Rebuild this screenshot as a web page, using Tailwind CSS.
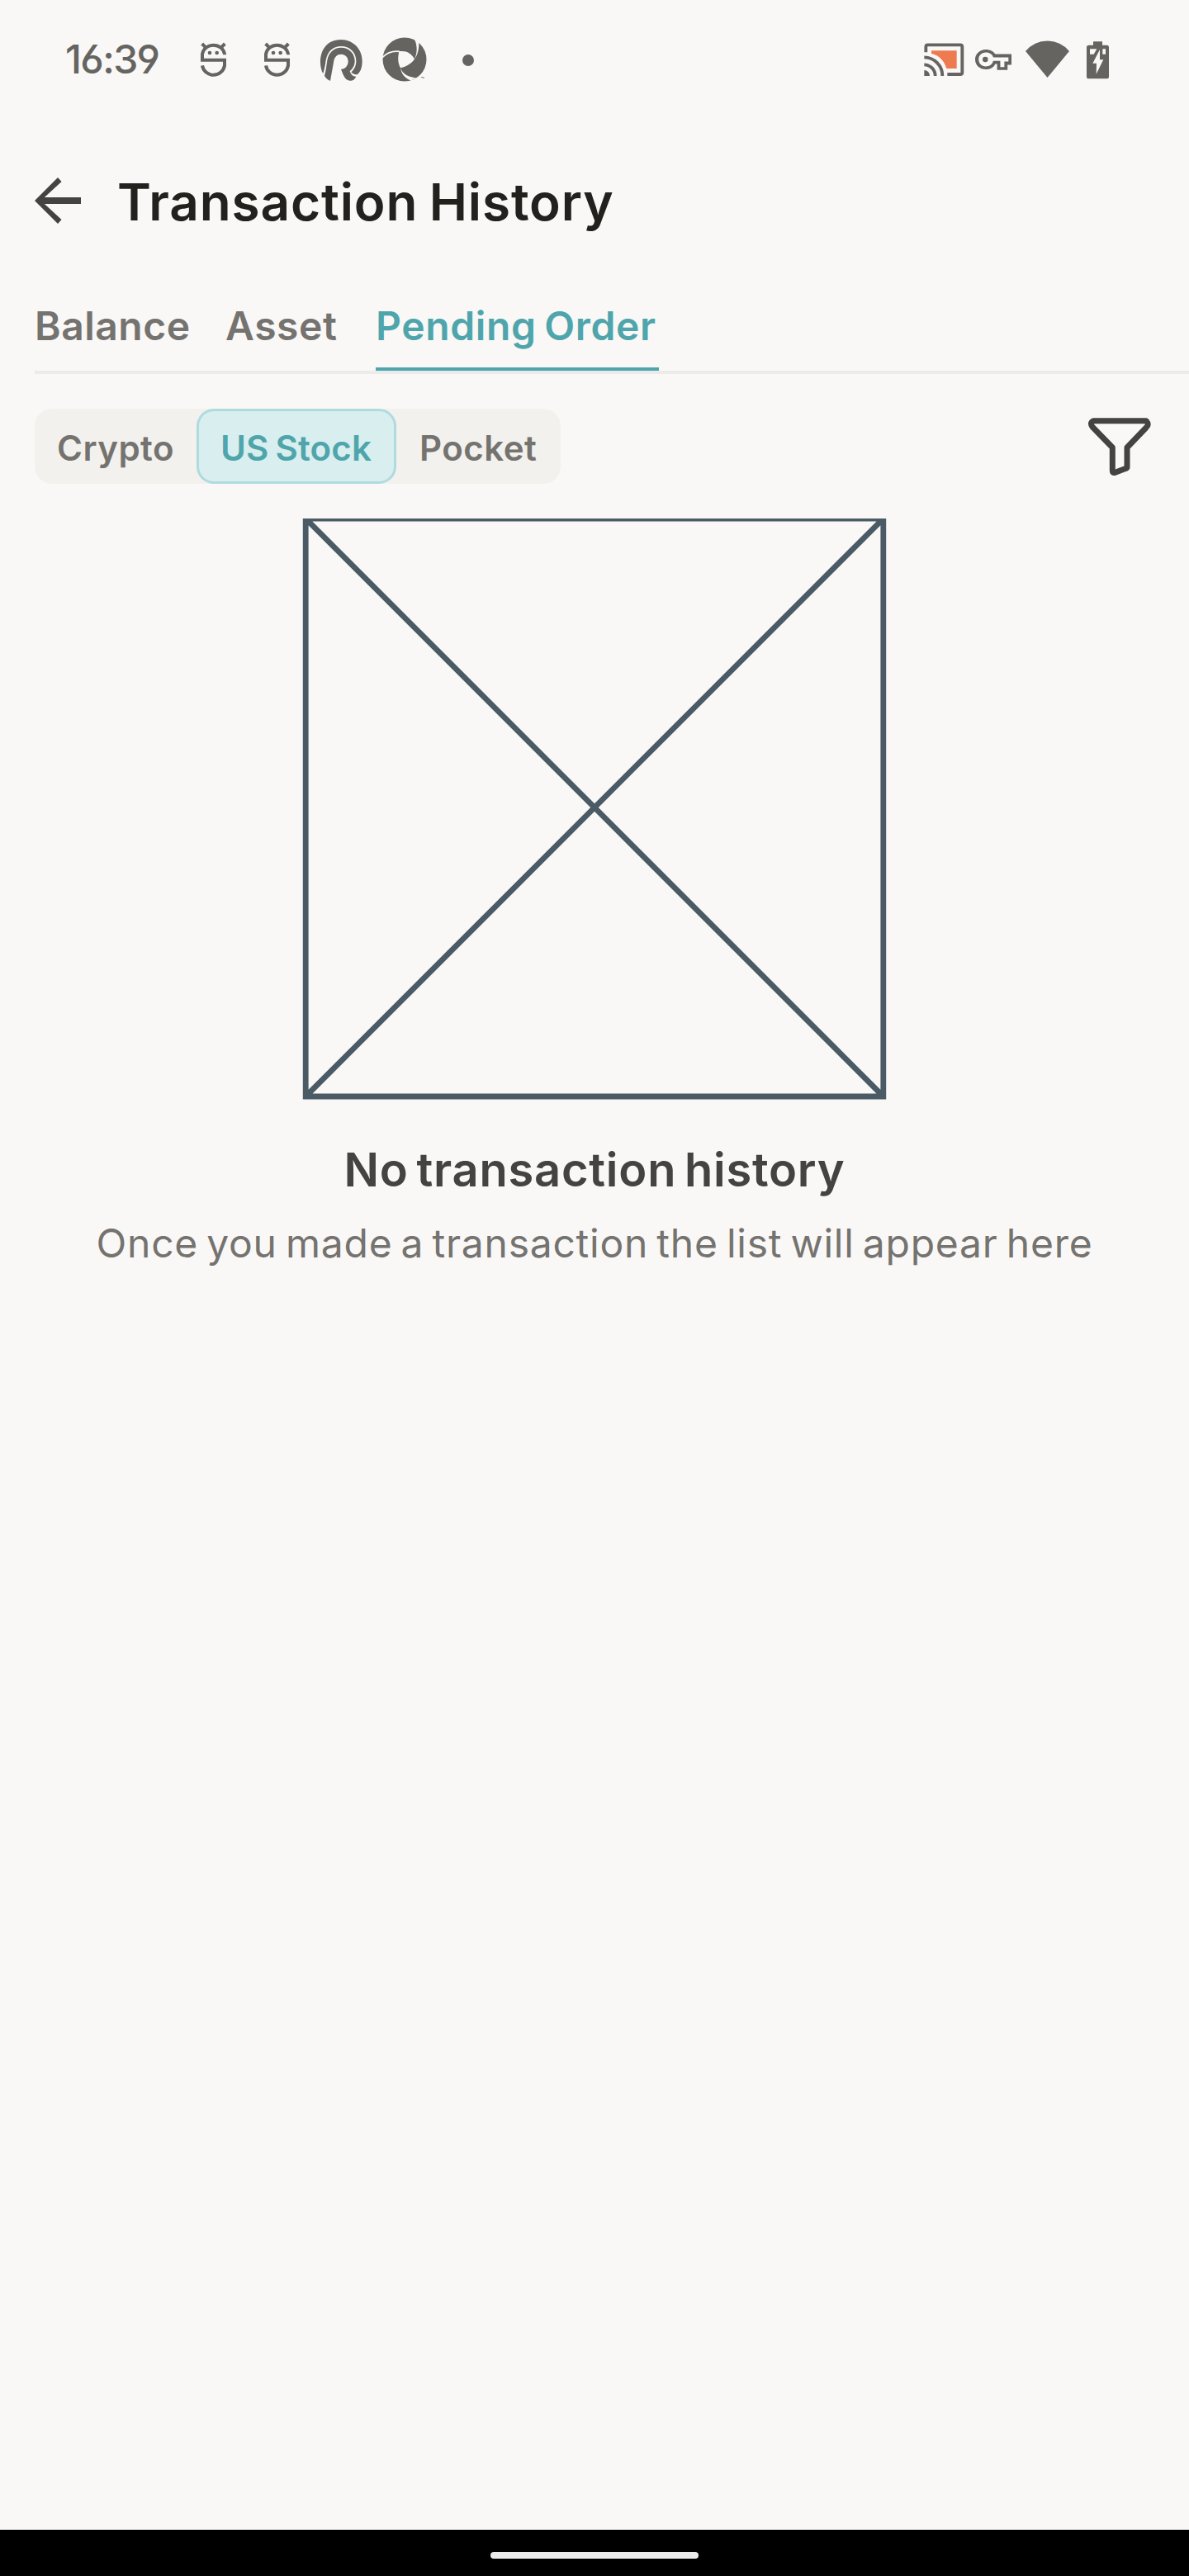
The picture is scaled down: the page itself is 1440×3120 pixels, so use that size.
<!DOCTYPE html>
<html lang="en">
<head>
<meta charset="utf-8">
<title>Transaction History</title>
<script src="https://cdn.jsdelivr.net/npm/@tailwindcss/browser@4"></script>
</head>
<body class="bg-[#f9f8f6]">
<div class="flex h-[3120px] w-[1440px] flex-col overflow-hidden bg-[#f9f8f6] font-['Inter',sans-serif]">

  <!-- status bar -->
  <div class="flex h-[144px] items-center justify-between pl-[79px] pr-[96px] text-[#666461]">
    <div class="flex items-center">
      <span class="w-[164px] text-[48px] leading-none font-medium tracking-[-1.6px] whitespace-nowrap [font-feature-settings:'cv03','cv04']">16:39</span>
      <svg class="h-[46px] w-[31px] translate-y-[1px]" viewBox="549 61 93 138" fill="none" stroke="currentColor" stroke-width="12">
        <path d="M636 110V107A41 37.500 0 0 0 555 107V129.500H636V149A41 41 0 0 1 555 149"/>
        <path d="M554 70L567 83M637 70L624 83"/>
        <g fill="currentColor" stroke="none"><circle cx="582" cy="103" r="7"/><circle cx="608" cy="103" r="7"/></g>
      </svg>
      <svg class="ml-[46px] h-[46px] w-[31px] translate-y-[1px]" viewBox="549 61 93 138" fill="none" stroke="currentColor" stroke-width="12">
        <path d="M636 110V107A41 37.500 0 0 0 555 107V129.500H636V149A41 41 0 0 1 555 149"/>
        <path d="M554 70L567 83M637 70L624 83"/>
        <g fill="currentColor" stroke="none"><circle cx="582" cy="103" r="7"/><circle cx="608" cy="103" r="7"/></g>
      </svg>
      <svg class="ml-[35px] h-[54px] w-[54px] translate-y-[1px]" viewBox="196 49 162 162" fill="currentColor">
        <path d="M212 178C192 148 196 55 277 55C322 55 354 90 354 132C354 156 348 171 338 180C330 184 320 180 314 173C325 164 332 150 332 132C332 101 308 79 278 79C246 79 227 100 222 130C220 146 216 166 212 178Z"/>
        <path d="M238 205C228 200 220 193 217 186C223 166 224 150 227 130C232 102 250 84 278 84C306 84 327 105 327 132C327 148 320 160 309 169C313 183 322 190 332 189C328 198 321 204 311 204C294 203 289 194 277 163C294 162 303 148 303 134C303 119 292 108 278 108C262 108 254 118 251 132Z"/>
      </svg>
      <svg class="ml-[23px] h-[54px] w-[54px]" viewBox="427 49 162 162">
        <circle cx="508" cy="130" r="79.500" fill="currentColor"/>
        <path fill="#f9f8f6" d="M488 101C512 97 532 106 544 129C528 150 508 157 493 161C483 143 483 122 488 101Z"/>
        <path fill="none" stroke="#f9f8f6" stroke-width="5" d="M426 124C444 104 466 98 490 101"/>
        <path fill="#f9f8f6" d="M544 129C554 106 555 84 545 58L560 66C561 90 556 112 544 129ZM493 160C499 178 512 192 548 197L532 207C508 198 496 182 493 160Z"/>
        <path fill="#f9f8f6" d="M545 199L556 195L592 186V215H530Z"/>
        <path fill="currentColor" d="M567 193H573V198M575 198V193L577 195L579 193V198Z"/>
      </svg>
      <span class="ml-[43px] h-[14px] w-[14px] translate-y-[1px] rounded-full bg-[#666461]"></span>
    </div>
    <div class="flex items-center">
      <svg class="h-[42px] w-[50px]" viewBox="53 65 150 126" fill="none" stroke="currentColor" stroke-width="11.500">
        <path fill="#ee7a50" stroke="none" d="M80 96H172V161H135C127 133 108 113 80 107Z"/>
        <path d="M60 102V82Q60 75 67 75H185Q192 75 192 82V175Q192 182 185 182H138"/>
        <path d="M54 120A67 67 0 0 1 120 188M54 147A40.500 40.500 0 0 1 94 188"/>
        <path fill="currentColor" stroke="none" d="M54 167A20 20 0 0 1 74 188H54Z"/>
      </svg>
      <svg class="ml-[12px] h-[44px] w-[44px]" viewBox="0 0 24 24" fill="currentColor">
        <path d="M22 19h-7.500v-4h-1.180c-1.140 2.420-3.600 3.600-6.320 3.600C3.200 18.600 0 15.800 0 12S3.200 5.400 7 5.400c2.720 0 5.170 1.180 6.320 3.100H24v7.100h-2.600V19zm-5.400-2h2.700v-3.600h2.700v-2.800H11.940l-.23-.67C11.010 8.340 9.110 7.400 7 7.400c-2.760 0-4.700 2-4.700 4.600s1.940 4.600 4.700 4.600c2.110 0 4.010-.94 4.710-2.930l.23-.67H16.600z"/>
        <circle cx="6.700" cy="12" r="1.800"/>
      </svg>
      <svg class="ml-[17px] h-[46px] w-[53px]" viewBox="423 58 159 138" fill="currentColor">
        <path d="M423 97A103 103 0 0 1 582 97L502.500 193Z"/>
      </svg>
      <svg class="ml-[21px] h-[46px] w-[27px] translate-y-[1px]" viewBox="645 61 81 138" fill="currentColor">
        <path d="M669 75V62H702V75H718Q726 75 726 83V189Q726 197 718 197H653Q645 197 645 189V83Q645 75 653 75Z"/>
        <path fill="#f9f8f6" d="M657 89H682L671 108H657ZM703 89H714V108H703Z"/>
        <path fill="#f9f8f6" d="M693 91L667 141H681L680 180L706 128H693Z"/>
      </svg>
      <span class="w-[1px]"></span>
    </div>
  </div>

  <!-- header -->
  <header class="flex h-[202px] items-center pl-7">
    <svg class="h-[84px] w-[84px] shrink-0 -translate-y-[2px]" viewBox="0 0 24 24" fill="#444341"><path d="M20 10.850H7.400l5.900-5.400L12 4l-8 8 8 8 1.300-1.450L7.400 13.150H20z"/></svg>
    <h1 class="ml-[30px] text-[62px] leading-none font-semibold tracking-[0.88px] [word-spacing:-3px] whitespace-nowrap text-[#23211e]">Transaction History</h1>
  </header>

  <!-- tabs -->
  <nav class="ml-[42px] flex h-[107px] border-b-4 border-[#ecebe9] pt-[25px] text-[48px] leading-none font-semibold whitespace-nowrap text-[#757370]">
    <span class="w-[231px] tracking-[0.5px]">Balance</span>
    <span class="w-[182px] tracking-[0.58px]">Asset</span>
    <span class="w-[343px] border-b-4 border-[#4fa5ac] tracking-[0.62px] [word-spacing:-3px] text-[#4fa5ac]">Pending Order</span>
  </nav>

  <!-- filters -->
  <div class="mt-[42px] flex h-[91px] items-center justify-between pr-[42px] pl-[42px]">
    <div class="flex h-full rounded-[21px] bg-[#f2f1ed] text-[42px] leading-none font-semibold whitespace-nowrap text-[#757370]">
      <span class="w-[196px] pt-[27px] pl-[27px] tracking-[0.48px]">Crypto</span>
      <span class="w-[242px] rounded-[21px] border-[3.500px] border-[#afdbdf] bg-[#d9eeee] pt-[24px] pl-[26px] tracking-[0.2px] [word-spacing:-3px] text-[#4fa5ac]">US Stock</span>
      <span class="w-[199px] pt-[27px] pl-[28px] tracking-[0.48px]">Pocket</span>
    </div>
    <svg class="h-[76px] w-[82px]" viewBox="1316 502 82 76" fill="none" stroke="#444341" stroke-width="7" stroke-linejoin="round">
      <path d="M1324 508.800H1388Q1392.500 513 1388 517L1365 541V565Q1365 566 1363 566.500L1350 571.500Q1347.300 572 1347.300 569V541L1323 516Q1319.500 511 1324 508.800Z"/>
    </svg>
  </div>

  <!-- empty state -->
  <main class="flex flex-1 flex-col items-center">
    <svg class="mt-[42px] h-[704px] w-[708px]" viewBox="366 628 708 704" fill="none" stroke="#4a5b66" stroke-width="6.800">
      <path d="M370.200 628.100H1069.800V1328H370.200ZM370.200 628.100L1069.800 1328M1069.800 628.100L370.200 1328"/>
    </svg>
    <h2 class="mt-[57px] text-[56px] leading-none font-semibold tracking-[0.76px] [word-spacing:-5px] whitespace-nowrap text-[#444341]">No transaction history</h2>
    <p class="mt-[37px] text-[48px] leading-none tracking-[0.75px] [word-spacing:-4px] whitespace-nowrap text-[#757370]">Once you made a transaction the list will appear here</p>
  </main>

  <!-- gesture bar -->
  <div class="flex h-14 justify-center bg-black pt-[27px]"><span class="h-2 w-[252px] rounded-full bg-[#ebebeb]"></span></div>
</div>
</body>
</html>
